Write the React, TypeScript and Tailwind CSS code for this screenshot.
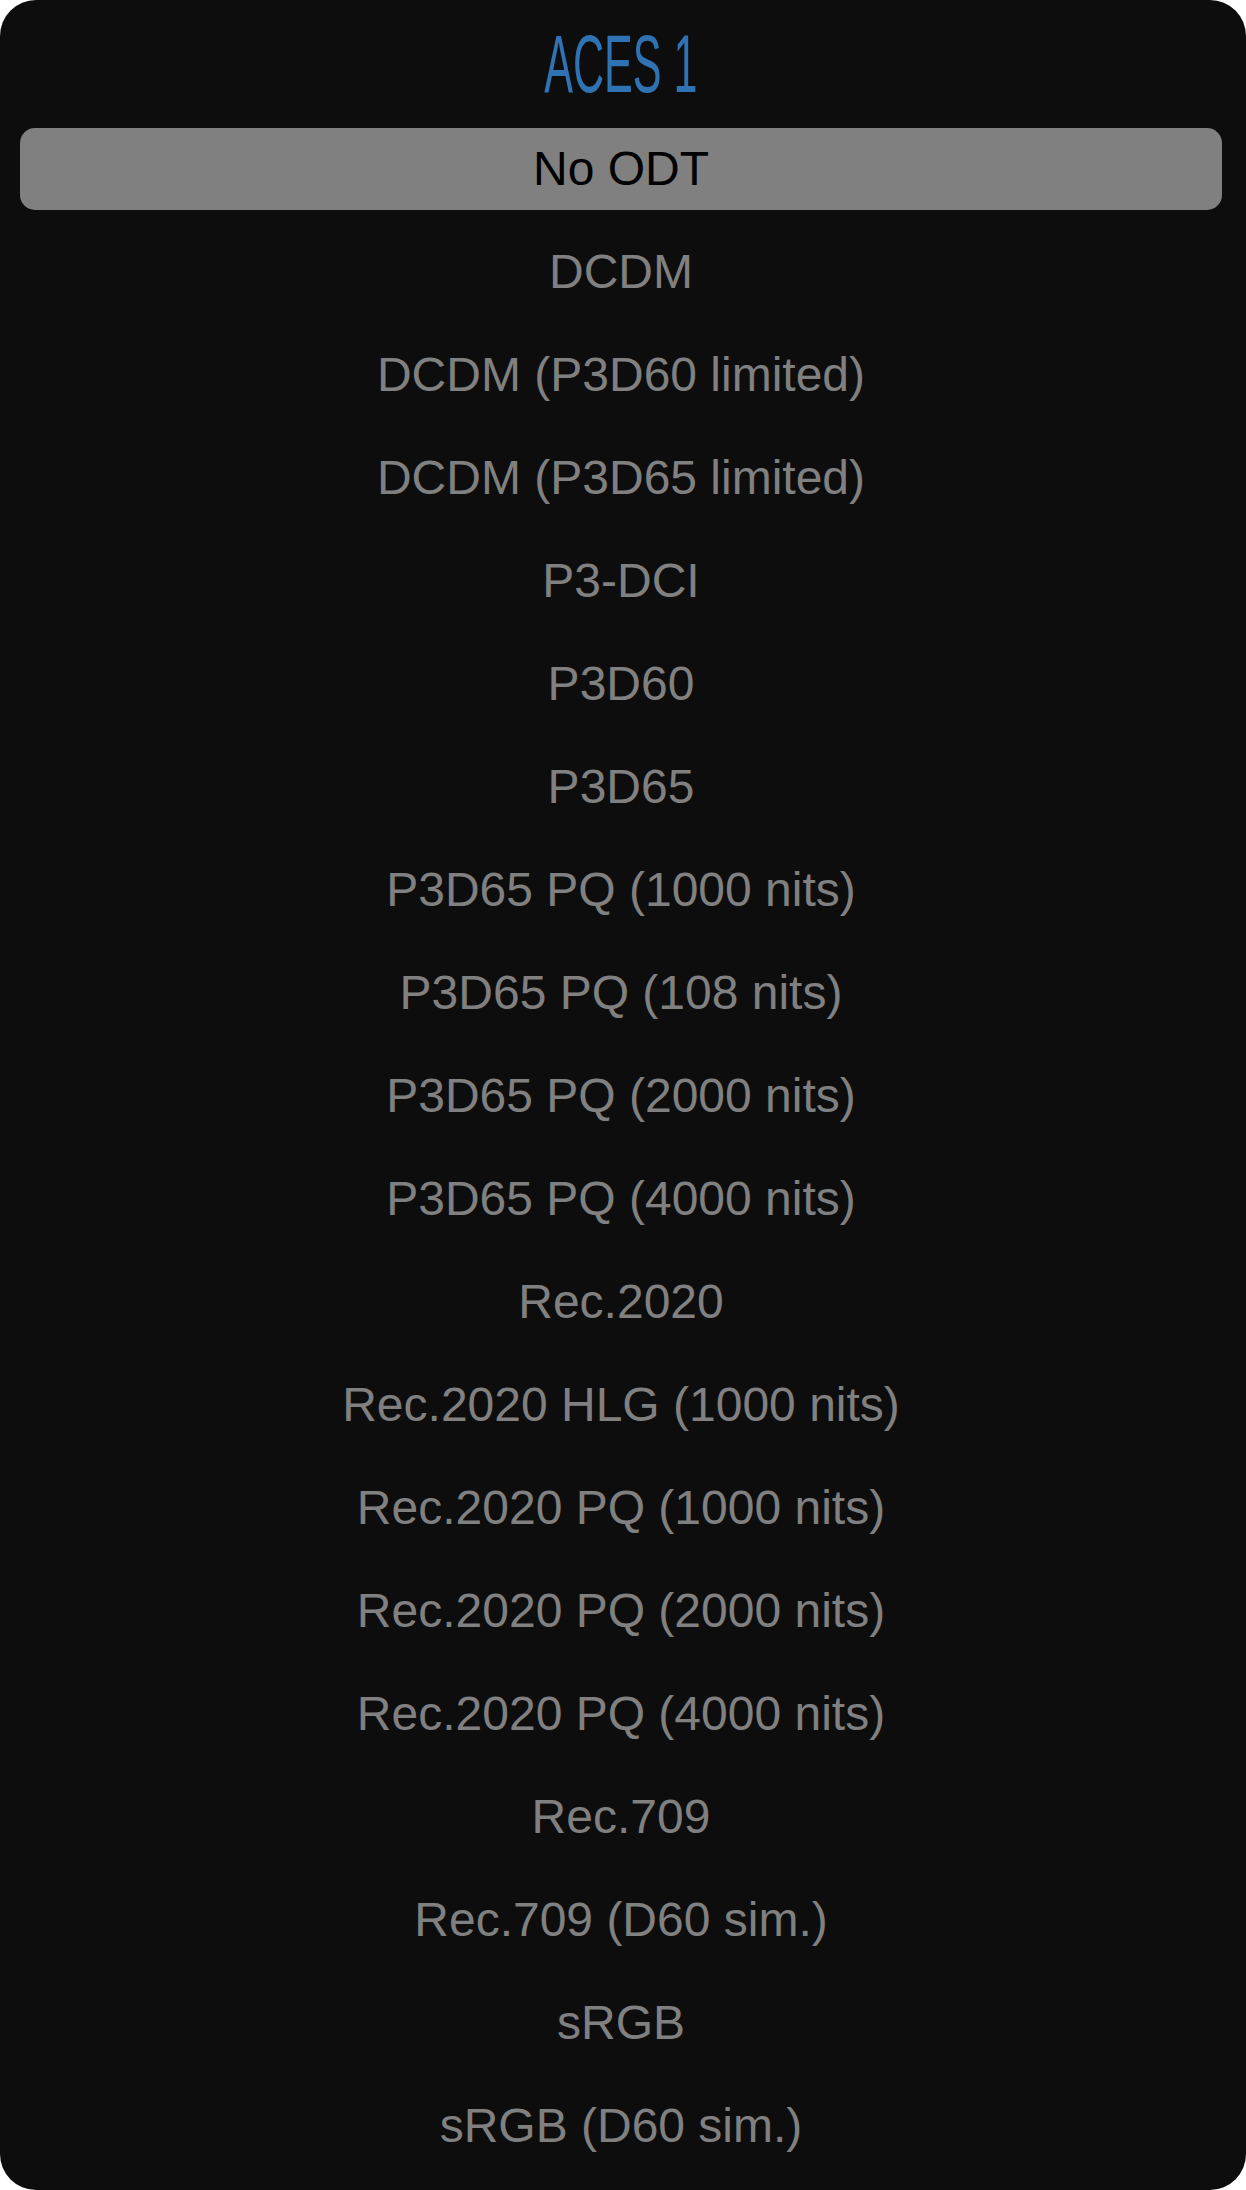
import React from "react";

const items = [
  "No ODT",
  "DCDM",
  "DCDM (P3D60 limited)",
  "DCDM (P3D65 limited)",
  "P3-DCI",
  "P3D60",
  "P3D65",
  "P3D65 PQ (1000 nits)",
  "P3D65 PQ (108 nits)",
  "P3D65 PQ (2000 nits)",
  "P3D65 PQ (4000 nits)",
  "Rec.2020",
  "Rec.2020 HLG (1000 nits)",
  "Rec.2020 PQ (1000 nits)",
  "Rec.2020 PQ (2000 nits)",
  "Rec.2020 PQ (4000 nits)",
  "Rec.709",
  "Rec.709 (D60 sim.)",
  "sRGB",
  "sRGB (D60 sim.)",
];

export default function App() {
  const selected = 0;
  return (
    <div className="w-[1246px] h-[2190px] bg-white">
      <div
        className="w-full h-full bg-[#0d0d0d] rounded-[36px] pl-[20px] pr-[24px] flex flex-col"
        style={{ fontFamily: '"Liberation Sans", Arial, sans-serif' }}
      >
        <div className="h-[128px] flex items-center justify-center">
          <span className="inline-block text-[82px] leading-none text-[#2f73b4] scale-x-[0.525]">
            ACES 1
          </span>
        </div>
        <ul className="flex flex-col gap-[21px]">
          {items.map((item, i) => (
            <li
              key={item}
              className={
                i === selected
                  ? "h-[82px] rounded-[15px] bg-[#808080] text-black text-[48px] leading-[82px] text-center"
                  : "h-[82px] rounded-[15px] text-[#808080] text-[48px] leading-[82px] text-center"
              }
            >
              {item}
            </li>
          ))}
        </ul>
      </div>
    </div>
  );
}
